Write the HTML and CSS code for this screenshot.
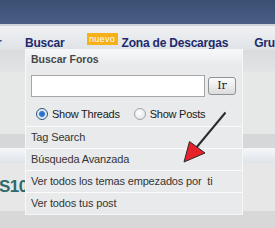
FILE: index.html
```html
<!DOCTYPE html>
<html lang="es">
<head>
<meta charset="utf-8">
<title>Buscar Foros</title>
<link rel="stylesheet" href="styles.css">
</head>
<body>
<div class="page">
  <header class="top"></header>
  <nav class="nav">
    <a class="nav-link frag">r</a>
    <a class="nav-link buscar">Buscar</a>
    <span class="badge">nuevo</span>
    <a class="nav-link zona">Zona de Descargas</a>
    <a class="nav-link">Grupos</a>
  </nav>
  <div class="crumb"></div>
  <div class="plain"></div>
  <div class="thead"></div>
  <div class="tsub"></div>
  <div class="content"><h1 class="title">S10</h1></div>
  <div class="foot"></div>

  <div class="dd">
    <div class="dd-head">Buscar Foros</div>
    <form class="dd-form">
      <div class="search-row">
        <input class="search-input" type="text">
        <button class="go" type="button">Ir</button>
      </div>
      <div class="radio-row">
        <label class="radio-opt"><span class="radio checked"></span>Show Threads</label>
        <label class="radio-opt"><span class="radio"></span>Show Posts</label>
      </div>
    </form>
    <a class="dd-item">Tag Search</a>
    <a class="dd-item">Búsqueda Avanzada</a>
    <a class="dd-item">Ver todos los temas empezados por&nbsp; ti</a>
    <a class="dd-item">Ver todos tus post</a>
  </div>

  <svg class="arrow" width="60" height="60" viewBox="0 0 60 60">
    <line x1="45.5" y1="4.5" x2="16" y2="40" stroke="#2b2b2b" stroke-width="2"/>
    <polygon points="4,54 9.5,33.5 25,45" fill="#e5222a" stroke="#2a2a2a" stroke-width="1" stroke-linejoin="round"/>
  </svg>
</div>
</body>
</html>
```
FILE: styles.css
```css
* { box-sizing: border-box; }
html, body { margin: 0; padding: 0; }
body {
  width: 275px;
  height: 228px;
  overflow: hidden;
  background: #e5e6e7;
  font-family: "Liberation Sans", Arial, sans-serif;
}
.page {
  position: relative;
  width: 275px;
  height: 228px;
  overflow: hidden;
  display: flex;
  flex-direction: column;
}
.top {
  height: 24px;
  flex: none;
  background: linear-gradient(#3a4f72, #4a5f86);
}
.nav {
  height: 26px;
  flex: none;
  display: flex;
  align-items: flex-start;
  padding-top: 10px;
  white-space: nowrap;
  border-top: 2px solid #cfd4db;
  background: linear-gradient(#eff1f3, #e0e3e6);
}
.nav-link {
  font-size: 12px;
  font-weight: bold;
  line-height: 14px;
  letter-spacing: -0.2px;
  color: #1d2a6c;
  flex: none;
}
.frag { width: 25px; margin-left: -3px; margin-right: 3px; }
.buscar { margin-right: 22px; }
.badge {
  flex: none;
  height: 12px;
  width: 31px;
  margin-top: -3px;
  margin-right: 4px;
  background: #f5b01a;
  color: #fff;
  font-size: 9px;
  line-height: 12px;
  text-align: center;
  letter-spacing: 0.3px;
}
.zona { margin-right: 26px; }
.crumb {
  height: 22px;
  flex: none;
  background: linear-gradient(#d9dbdd, #e3e4e5);
}
.plain { height: 62px; flex: none; background: #e6e7e7; }
.thead { height: 14px; flex: none; background: #d6d7d8; }
.tsub {
  height: 15px;
  flex: none;
  background: linear-gradient(#f5f7fa, #dfe4ea);
}
.content {
  height: 48px;
  flex: none;
  background: #e7e7e7;
  padding-top: 14px;
}
.title {
  margin: 0 0 0 -1px;
  font-size: 17px;
  line-height: 19px;
  font-weight: bold;
  letter-spacing: -0.5px;
  color: #2c6a6e;
}
.foot { flex: 1; background: #d8d8d8; }

/* dropdown menu */
.dd {
  position: absolute;
  left: 25px;
  top: 49px;
  width: 218px;
  border: 1px solid #f7f7f7;
  background: #e9eaeb;
  display: flex;
  flex-direction: column;
}
.dd-head {
  height: 18px;
  padding-left: 5px;
  font-size: 10.5px;
  font-weight: bold;
  line-height: 18px;
  color: #474747;
  background: linear-gradient(#f6f7f8, #e6e8ea);
}
.dd-form {
  margin: 0;
  height: 58px;
  padding: 7px 0 0 5px;
}
.search-row { display: flex; align-items: center; gap: 3px; }
.search-input {
  width: 174px;
  height: 22px;
  margin: 0;
  border: 1px solid #a4a6a8;
  background: #fff;
  padding: 0 3px;
}
.go {
  width: 28px;
  height: 18px;
  margin: 0;
  padding: 0;
  border: 1px solid #8f9193;
  border-radius: 3px;
  background: linear-gradient(#fbfbfb, #dcdcdc);
  font-family: "DejaVu Serif", "Liberation Serif", serif;
  font-size: 11px;
  line-height: 16px;
  color: #222;
}
.radio-row {
  display: flex;
  align-items: center;
  gap: 14px;
  margin-top: 10px;
  padding-left: 5px;
  font-size: 11px;
  line-height: 14px;
  letter-spacing: -0.25px;
  color: #202020;
}
.radio-opt { display: flex; align-items: center; gap: 4px; }
.radio {
  width: 12px;
  height: 12px;
  border-radius: 50%;
  border: 1px solid #9ea4aa;
  background: radial-gradient(circle at 40% 40%, #ffffff, #dcdfe2);
}
.radio.checked {
  border-color: #2f5376;
  background: radial-gradient(circle, #1f5fc4 0, #3b7fd8 2.6px, #d7e3ee 3.4px, #f4f7fa 6px);
}
.dd-item {
  display: block;
  height: 22px;
  border-top: 1px solid #fbfbfb;
  padding-left: 5px;
  font-size: 11px;
  line-height: 21px;
  letter-spacing: -0.15px;
  color: #353535;
  white-space: nowrap;
}

.arrow {
  position: absolute;
  left: 180px;
  top: 108px;
}
```
